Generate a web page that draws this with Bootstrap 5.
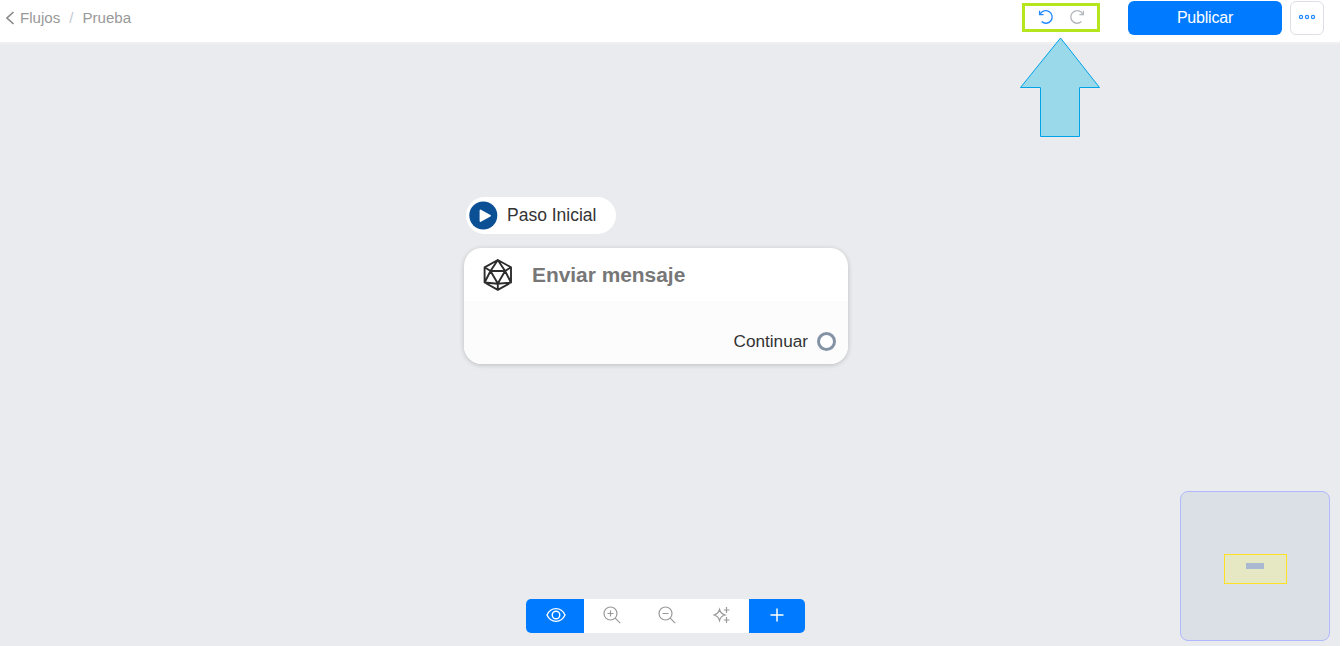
<!DOCTYPE html>
<html lang="es">
<head>
<meta charset="UTF-8">
<meta name="viewport" content="width=device-width, initial-scale=1.0">
<title>Flujos / Prueba</title>
<link href="https://cdn.jsdelivr.net/npm/bootstrap@5.3.0/dist/css/bootstrap.min.css" rel="stylesheet">
<style>
    body { font-family: "Liberation Sans", Arial, sans-serif; background: #e9ebee; border-right: 2px solid #fff; }
    svg { display: block; flex: none; }
    .topbar { height: 44px; border-bottom: 2px solid #f0f0f2; padding: 0 16px 6px 6px; font-size: 16px; }
    .crumbs { color: #999; font-size: 15.1px; line-height: 20px; }
    .crumbs a { color: inherit; margin-left: 5px; }
    .crumbs .slash { color: #c5c9d3; margin: 0 9px; }
    .history { width: 78px; height: 29px; border: 3px solid #b5e61d; margin: -2px 28px 0 0; padding-left: 13px; gap: 15px; }
    .btn-publish { width: 154px; height: 34px; padding: 0; font-size: 16px; letter-spacing: -.2px; line-height: 32px; background: #007bff; border-radius: 6px; margin-right: 8px; }
    .btn-more { width: 34px; height: 34px; border: 1px solid #dcdfe6; border-radius: 6px; }
    .canvas { height: 602px; }
    .pointer { left: 1019px; top: -8px; }
    .start { left: 466px; top: 153px; width: 150px; height: 37px; padding-left: 3px; gap: 9px; border-radius: 19px; font-size: 17.5px; color: #333; }
    .step { left: 464px; top: 204px; width: 384px; height: 116px; border-radius: 18px; box-shadow: 0 1px 5px rgba(0, 0, 0, .2); }
    .step-head { height: 53px; padding: 0 0 0 18px; gap: 19px; font-size: 20.9px; color: #777; }
    .step-out { height: 63px; padding: 17px 12px 0 0; gap: 9px; background: #fcfcfc; font-size: 17.2px; color: #333; }
    .step-out .label-out { padding-top: 1px; }
    .port { width: 19px; height: 19px; border: 3px solid #8492a6; border-radius: 50%; }
    .tools { left: 526px; top: 555px; width: 279px; height: 34px; border-radius: 5px; }
    .tools .btn { padding: 0 0 2px; border: 0; border-radius: 0; color: #999; }
    .tools .btn-on { background: #007bff; color: #fff; }
    .tools .w-eye { width: 58px; padding-left: 2px; }
    .w-tool { width: 55px; }
    .w-add { width: 56px; }
    .minimap { left: 1180px; top: 447px; width: 150px; height: 150px; border: 1px solid #b0b8ff; border-radius: 8px; background: #dbdfe6; }
    .viewport-box { left: 43px; top: 62px; width: 63px; height: 30px; border: 1px solid #ffe123; background: #e6e8c4; }
    .mini-step { left: 21px; top: 8px; width: 18px; height: 6px; background: #aab8d2; }
</style>
</head>
<body class="overflow-hidden">
<header class="topbar bg-white d-flex align-items-center">
    <nav class="crumbs d-flex align-items-center me-auto">
        <svg width="9" height="14" viewBox="0 0 9 14" fill="none" stroke="#888" stroke-width="1.6"><path d="M7.500 1 1 7l6.500 6"/></svg>
        <a href="#" class="text-decoration-none">Flujos</a><span class="slash">/</span><span>Prueba</span>
    </nav>
    <div class="history d-flex align-items-center">
        <svg width="16" height="16" viewBox="0 0 16 16" fill="none" stroke="#2589ff" stroke-width="1.3"><path d="M2.200 5.200A6.300 6.300 0 1 1 3.600 12.600M1.600 1.800V5.600H5.600"/></svg>
        <svg width="16" height="16" viewBox="0 0 16 16" fill="none" stroke="#b4b8bf" stroke-width="1.3"><path d="M13.800 5.200A6.300 6.300 0 1 0 12.400 12.600M14.400 1.800V5.600H10.400"/></svg>
    </div>
    <button class="btn btn-primary btn-publish border-0">Publicar</button>
    <button class="btn btn-more bg-white p-0 d-flex align-items-center justify-content-center">
        <svg width="18" height="8" viewBox="0 0 18 8" fill="none" stroke="#2589ff" stroke-width="1.2"><circle cx="3" cy="3" r="1.600"/><circle cx="9" cy="3" r="1.600"/><circle cx="15" cy="3" r="1.600"/></svg>
    </button>
</header>

<main class="canvas position-relative">
    <svg class="pointer position-absolute" width="82" height="102" viewBox="0 0 82 102"><path d="M41.500 2 80.500 51.500H60.500v49h-39v-49H1.500z" fill="#99d9ea" stroke="#00a2e8"/></svg>

    <div class="start position-absolute bg-white d-flex align-items-center">
        <svg width="29" height="29" viewBox="0 0 29 29"><circle cx="14.300" cy="14.500" r="14" fill="#0b4f94"/><path d="M11.500 9.500v10.500l9.500-5.250z" fill="#fff" stroke="#fff" stroke-width="1.800" stroke-linejoin="round"/></svg>
        <span>Paso Inicial</span>
    </div>

    <section class="step position-absolute bg-white overflow-hidden">
        <div class="step-head d-flex align-items-center fw-bold">
            <svg width="31" height="33" viewBox="0 0 31 33" fill="none" stroke="#2d2d2d" stroke-width="1.900" stroke-linejoin="round"><path d="M15.800 2 29 9.300v15.200L15.800 31.800 2.600 24.500V9.300zM15.800 2 8.500 13h14.600zM8.500 13l7.300 12.500 7.300-12.500M2.600 9.300l5.900 3.700-5.900 11.500 13.200 1.300 13.200-1.300-5.900-11.500L29 9.300M15.800 25.500v6"/></svg>
            <span>Enviar mensaje</span>
        </div>
        <div class="step-out d-flex align-items-center justify-content-end">
            <span class="label-out">Continuar</span>
            <span class="port bg-white"></span>
        </div>
    </section>

    <div class="tools position-absolute d-flex bg-white overflow-hidden">
        <button class="btn btn-on w-eye d-flex align-items-center justify-content-center">
            <svg width="20" height="16" viewBox="0 0 20 16" fill="none" stroke="currentColor" stroke-width="1.400"><path d="M1 8C5-.500 15-.500 19 8 15 16.500 5 16.500 1 8z"/><circle cx="10" cy="8" r="3.800"/></svg>
        </button>
        <button class="btn w-tool d-flex align-items-center justify-content-center">
            <svg width="18" height="18" viewBox="0 0 18 18" fill="none" stroke="currentColor" stroke-width="1.200"><circle cx="7.500" cy="7.500" r="6.500"/><path d="m12.200 12.200 5 5M4.500 7.500h6M7.500 4.500v6"/></svg>
        </button>
        <button class="btn w-tool d-flex align-items-center justify-content-center">
            <svg width="18" height="18" viewBox="0 0 18 18" fill="none" stroke="currentColor" stroke-width="1.200"><circle cx="7.500" cy="7.500" r="6.500"/><path d="m12.200 12.200 5 5M4.500 7.500h6"/></svg>
        </button>
        <button class="btn w-tool d-flex align-items-center justify-content-center">
            <svg width="18" height="18" viewBox="0 0 18 18" fill="none" stroke="currentColor" stroke-width="1.200"><path d="M6.500 3.500Q7.700 7.800 12 9 7.700 10.200 6.500 14.500 5.300 10.200 1 9 5.300 7.800 6.500 3.500zM13.500 1v6M10.800 4h5.700M13.500 11v6M10.800 14h5.700"/></svg>
        </button>
        <button class="btn btn-on w-add d-flex align-items-center justify-content-center">
            <svg width="14" height="14" viewBox="0 0 14 14" fill="none" stroke="currentColor" stroke-width="1.500"><path d="M7 .500v13M.500 7h13"/></svg>
        </button>
    </div>

    <div class="minimap position-absolute">
        <div class="viewport-box position-absolute">
            <div class="mini-step position-absolute"></div>
        </div>
    </div>
</main>
<script src="https://cdn.jsdelivr.net/npm/bootstrap@5.3.0/dist/js/bootstrap.bundle.min.js"></script>
</body>
</html>
